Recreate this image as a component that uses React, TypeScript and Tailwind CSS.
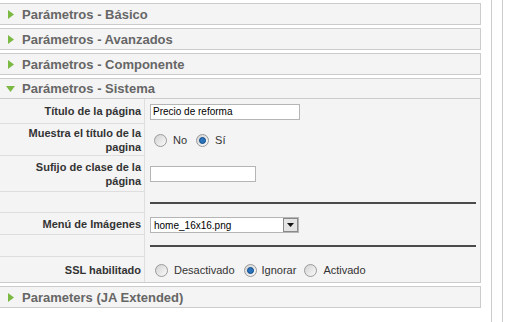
import React from "react";

type Row = {
  label: React.ReactNode;
  h: string;
  value: React.ReactNode;
  last?: boolean;
};

function Arrow({ open }: { open?: boolean }) {
  if (open) {
    return (
      <svg className="w-[9px] h-[6px] ml-[6px] mr-[7px]" viewBox="0 0 9 6">
        <path d="M0 0h9L4.5 6z" fill="#7cb943" />
      </svg>
    );
  }
  return (
    <svg className="w-[6px] h-[9px] ml-[8px] mr-[8px]" viewBox="0 0 6 9">
      <path d="M0 0l6 4.5L0 9z" fill="#7cb943" />
    </svg>
  );
}

function Header({ title, open }: { title: string; open?: boolean }) {
  return (
    <div className={`h-[20px] flex items-center ${open ? "border-b border-[#cccccc]" : ""}`}>
      <Arrow open={open} />
      <span className="text-[13px] font-bold text-[#666666] leading-none">{title}</span>
    </div>
  );
}

function Radio({ checked }: { checked?: boolean }) {
  return (
    <span className="w-[13px] h-[13px] rounded-full border border-[#9a9a9a] bg-gradient-to-br from-[#d2d2d2] to-[#fbfbfb] flex items-center justify-center shrink-0">
      {checked && (
        <span className="w-[7px] h-[7px] rounded-full bg-[#2a74bd] border border-[#0f4a85]" />
      )}
    </span>
  );
}

function Panel({ title }: { title: string }) {
  return (
    <div className="border border-[#cccccc] bg-[#f4f4f4]">
      <Header title={title} />
    </div>
  );
}

export default function App() {
  const rows: Row[] = [
    {
      label: "Título de la página",
      h: "h-[25px]",
      value: (
        <div className="w-[150px] h-[16px] bg-white border border-[#b5b5b5] flex items-center px-[2px] text-[10px] text-black">
          Precio de reforma
        </div>
      ),
    },
    {
      label: (
        <>
          Muestra el título de la
          <br />
          pagina
        </>
      ),
      h: "h-[32px]",
      value: (
        <div className="flex items-center text-[11px] text-[#333333] pl-[4px] pt-[1px]">
          <Radio />
          <span className="ml-[6px] mr-[9px]">No</span>
          <Radio checked />
          <span className="ml-[6px]">Sí</span>
        </div>
      ),
    },
    {
      label: (
        <>
          Sufijo de clase de la
          <br />
          página
        </>
      ),
      h: "h-[36px]",
      value: <div className="w-[106px] h-[16px] bg-white border border-[#b5b5b5]" />,
    },
    {
      label: "",
      h: "h-[21px]",
      value: <div className="w-[326px] h-[2px] bg-[#4a4a4a] mt-[1px]" />,
    },
    {
      label: "Menú de Imágenes",
      h: "h-[22px]",
      value: (
        <div className="w-[149px] h-[16px] bg-white border border-[#b5b5b5] flex items-center mt-[2px]">
          <span className="flex-1 pl-[3px] text-[10px] text-black">home_16x16.png</span>
          <span className="w-[15px] h-[14px] border border-[#8a8a8a] bg-[#e4e4e4] flex items-center justify-center">
            <svg className="w-[7px] h-[4px]" viewBox="0 0 7 4">
              <path d="M0 0h7L3.5 4z" fill="#111" />
            </svg>
          </span>
        </div>
      ),
    },
    {
      label: "",
      h: "h-[22px]",
      value: <div className="w-[326px] h-[2px] bg-[#4a4a4a]" />,
    },
    {
      label: "SSL habilitado",
      h: "h-[25px]",
      last: true,
      value: (
        <div className="flex items-center text-[11px] text-[#333333] pl-[5px] pt-[2px]">
          <Radio />
          <span className="ml-[6px] mr-[9px]">Desactivado</span>
          <Radio checked />
          <span className="ml-[5px] mr-[8px]">Ignorar</span>
          <Radio />
          <span className="ml-[6px]">Activado</span>
        </div>
      ),
    },
  ];

  return (
    <div className="w-[505px] h-[322px] bg-white flex font-['Liberation_Sans',Arial,sans-serif] overflow-hidden">
      <div className="w-[482px] -ml-px pt-[3px] flex flex-col gap-[3px] shrink-0">
        <Panel title="Parámetros - Básico" />
        <Panel title="Parámetros - Avanzados" />
        <Panel title="Parámetros - Componente" />

        <div className="border border-[#cccccc] bg-[#f4f4f4]">
          <Header title="Parámetros - Sistema" open />
          {rows.map((r, i) => (
            <div key={i} className={`flex ${r.h}`}>
              <div
                className={`w-[145px] shrink-0 border-r border-[#dedede] ${r.last ? "" : "border-b"} flex items-center justify-end pr-[3px] text-right text-[11px] font-bold text-[#333333] leading-[14px]`}
              >
                <span>{r.label}</span>
              </div>
              <div className="flex-1 flex items-center pl-[5px]">{r.value}</div>
            </div>
          ))}
        </div>

        <Panel title="Parameters (JA Extended)" />
      </div>

      <div className="ml-[10px] w-[12px] h-full border-x border-[#cccccc] shrink-0" />
    </div>
  );
}
